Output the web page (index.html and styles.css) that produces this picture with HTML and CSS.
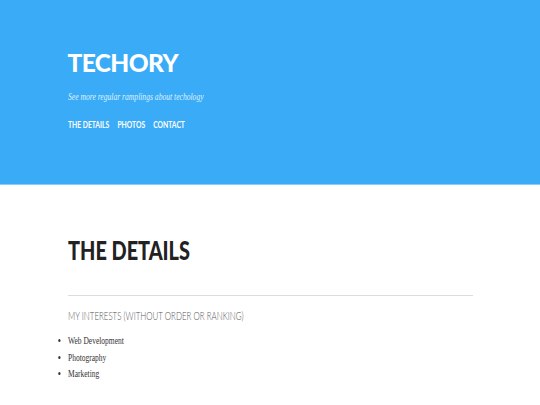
FILE: index.html
```html
<!DOCTYPE html>
<html>
<head>
<meta charset="utf-8">
<link rel="stylesheet" href="styles.css">
</head>
<body>
<header class="site-header">
  <div class="container">
    <h1 class="site-title">TECHORY</h1>
    <p class="tagline">See more regular ramplings about techology</p>
    <nav class="nav">
      <a href="#">THE DETAILS</a>
      <a href="#">PHOTOS</a>
      <a href="#">CONTACT</a>
    </nav>
  </div>
</header>
<main class="container content">
  <h2 class="page-title">THE DETAILS</h2>
  <hr class="rule">
  <h3 class="section-title">MY INTERESTS (WITHOUT ORDER OR RANKING)</h3>
  <ul class="list">
    <li>Web Development</li>
    <li>Photography</li>
    <li>Marketing</li>
  </ul>
</main>
</body>
</html>
```
FILE: styles.css
```css
html, body {
  margin: 0;
  padding: 0;
  background: #fff;
}
body {
  font-family: "Liberation Serif", serif;
}
.container {
  width: 405px;
  margin: 0 auto;
}
.site-header {
  background: #3aabf6;
  height: 185px;
  border-bottom: 1px solid #86cdfa;
  padding-top: 50px;
  box-sizing: border-box;
}
.site-title {
  font-family: Lato, sans-serif;
  font-weight: 900;
  font-size: 24.5px;
  color: #fff;
  margin: 0;
  line-height: 25px;
  letter-spacing: -0.6px;
}
.tagline {
  font-family: "Liberation Serif", serif;
  font-style: italic;
  font-size: 10px;
  color: #dff1fe;
  margin: 16px 0 0;
  line-height: 12px;
  transform: scaleX(0.76);
  transform-origin: left center;
  white-space: nowrap;
}
.nav {
  display: flex;
  gap: 11.5px;
  margin-top: 16px;
  transform: scaleX(0.71);
  transform-origin: left center;
}
.nav a {
  font-family: Lato, sans-serif;
  font-weight: 700;
  font-size: 9.5px;
  color: #fff;
  text-decoration: none;
  line-height: 12px;
  white-space: nowrap;
}
.content {
  padding-top: 50px;
}
.page-title {
  font-family: Lato, sans-serif;
  font-weight: 900;
  font-size: 26.5px;
  color: #222;
  margin: 0;
  line-height: 30px;
  transform: scaleX(0.75);
  transform-origin: left center;
  white-space: nowrap;
}
.rule {
  border: 0;
  border-top: 1px solid #dcdcdc;
  margin: 30px 0 0;
}
.section-title {
  font-family: Lato, sans-serif;
  font-weight: 300;
  font-size: 11px;
  color: #555;
  margin: 13px 0 0;
  line-height: 14px;
  transform: scaleX(0.72);
  transform-origin: left center;
  white-space: nowrap;
}
.list {
  margin: 10px 0 0;
  padding: 0;
  font-size: 10px;
  color: #333;
  line-height: 16.67px;
  transform: scaleX(0.75);
  transform-origin: left center;
}
```
